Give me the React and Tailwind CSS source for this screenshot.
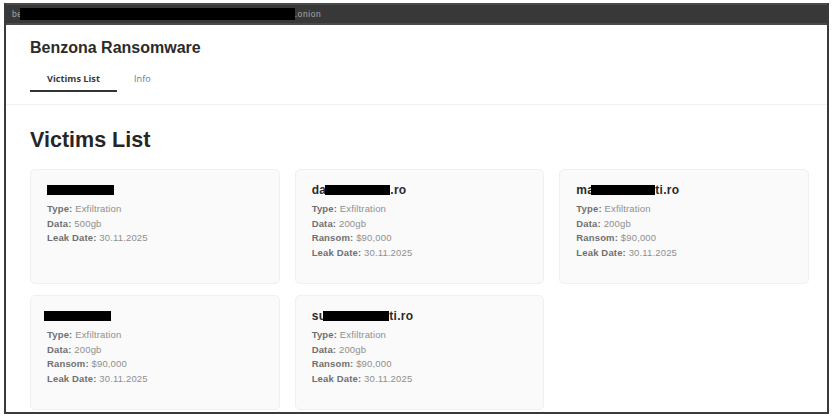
const sans = { fontFamily: '"Liberation Sans", Arial, sans-serif' };

const victims = [
  {
    id: 1,
    name: <span className="block h-[10px] w-[67px] bg-black" />,
    data: "500gb",
  },
  {
    id: 2,
    name: (
      <>
        da<span className="-ml-[1px] inline-block h-[10px] w-[65px] bg-black align-[-1px]" />.ro
      </>
    ),
    data: "200gb",
    ransom: "$90,000",
  },
  {
    id: 3,
    name: (
      <>
        ma<span className="-ml-[3px] inline-block h-[10px] w-[64px] bg-black align-[-1px]" />ti.ro
      </>
    ),
    data: "200gb",
    ransom: "$90,000",
  },
  {
    id: 4,
    name: <span className="-ml-[3px] block h-[10px] w-[67px] bg-black" />,
    data: "200gb",
    ransom: "$90,000",
  },
  {
    id: 5,
    name: (
      <>
        su<span className="-ml-[3px] inline-block h-[10px] w-[66px] bg-black align-[-1px]" />ti.ro
      </>
    ),
    data: "200gb",
    ransom: "$90,000",
  },
];

const Row = ({ label, value }) => (
  <p className="h-[14.6px] text-[9.5px] leading-[14.6px] tracking-[0.15px] text-[#8f8f8f]">
    <span className="font-bold text-[#707070]">{label}:</span> {value}
  </p>
);

const Card = ({ victim }) => (
  <div className="h-[115px] rounded-[5px] border border-[#f0f0f0] bg-[#fafafa] px-[16px] pt-[14px]">
    <h3 className="flex h-[12px] items-center text-[12px] font-bold leading-[12px] tracking-[0.3px] text-[#2a2a2a]">
      <span className="block whitespace-nowrap">{victim.name}</span>
    </h3>
    <div className="mt-[6px]">
      <Row label="Type" value="Exfiltration" />
      <Row label="Data" value={victim.data} />
      {victim.ransom && <Row label="Ransom" value={victim.ransom} />}
      <Row label="Leak Date" value="30.11.2025" />
    </div>
  </div>
);

export default function App() {
  return (
    <div className="h-[417px] w-[833px] overflow-hidden bg-white pl-[4px] pt-[3px]" style={sans}>
      <div className="h-[411px] w-[825px] overflow-hidden border-x-2 border-b-2 border-[#3a3a3a]">
        <div className="flex h-[22px] items-center border-y-2 border-[#4a4a4a] bg-[#383838] pl-[6px] text-[8.5px] tracking-[0.6px] text-[#a8a8a8]">
          <span>be</span>
          <span className="-ml-[3px] h-[12px] w-[275px] bg-black" />
          <span>.onion</span>
        </div>

        <header className="h-[80px] border-b border-[#f2f2f2]">
          <h1 className="pl-[24px] pt-[14px] text-[16px] font-bold leading-[18px] text-[#2b2b2b]">
            Benzona Ransomware
          </h1>
          <nav className="ml-[24px] mt-[13px] flex text-[9.2px]" style={{ fontFamily: '"Open Sans", sans-serif' }}>
            <div className="flex h-[22px] w-[87px] items-start justify-center border-b-2 border-[#333333] pt-[2px] font-bold leading-[13px] text-[#3a3a3a]">
              Victims List
            </div>
            <div className="ml-[17px] pt-[2px] leading-[13px] text-[#777777]">Info</div>
          </nav>
        </header>

        <main className="px-[24px] pt-[23px]">
          <h2 className="text-[21.5px] font-bold leading-[24px] text-[#262626]">Victims List</h2>
          <div className="mt-[17px] grid w-[779px] grid-cols-3 gap-x-[15px] gap-y-[11px]">
            {victims.map((victim) => (
              <Card key={victim.id} victim={victim} />
            ))}
          </div>
        </main>
      </div>
    </div>
  );
}
